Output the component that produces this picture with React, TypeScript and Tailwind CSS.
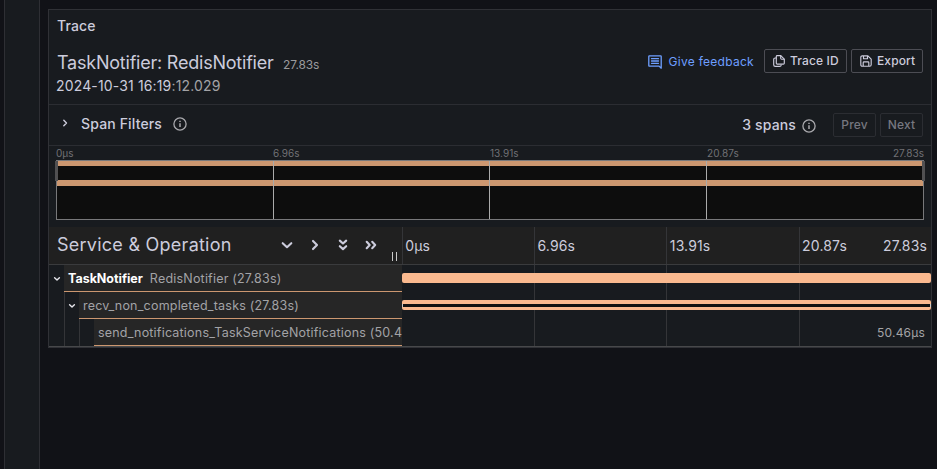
import type { ReactNode } from 'react';

const ticks = ['0µs', '6.96s', '13.91s', '20.87s'];

function Info({ className = '' }: { className?: string }) {
  return (
    <svg viewBox="0 0 14 14" className={`h-[14px] w-[14px] shrink-0 ${className}`} fill="none" stroke="#a9a9ad" strokeWidth="1.3">
      <circle cx="7" cy="7" r="6.1" />
      <path d="M7 6.3V10" strokeWidth="1.5" />
      <path d="M7 3.7v1.4" strokeWidth="1.5" />
    </svg>
  );
}

function Glyph({ d, className = '', width = 2.1 }: { d: string; className?: string; width?: number }) {
  return (
    <svg viewBox="0 0 16 16" className={`h-4 w-4 shrink-0 ${className}`} fill="none" stroke="#ccccdc" strokeWidth={width} strokeLinecap="round" strokeLinejoin="round">
      <path d={d} />
    </svg>
  );
}

function Button({ children, className }: { children: ReactNode; className: string }) {
  return (
    <button className={`flex h-6 shrink-0 items-center rounded-[2px] border text-[12px] font-medium leading-[22px] tracking-[0.13px] ${className}`}>
      {children}
    </button>
  );
}

function Grid() {
  return (
    <>
      {ticks.map((t) => (
        <div key={t} className="border-l border-[#343538] first:border-transparent" />
      ))}
    </>
  );
}

function Row({ indent, chevron, children, bar }: { indent: number; chevron?: boolean; children: ReactNode; bar: ReactNode }) {
  return (
    <div className="flex h-[27px]">
      <div className="flex w-[352.8px] shrink-0">
        {Array.from({ length: indent }, (_, i) => (
          <div key={i} className={`flex w-[15px] shrink-0 items-center justify-center ${i > 0 ? 'border-l border-[#343538]' : ''}`}>
            {chevron && i === indent - 1 && (
              <svg viewBox="0 0 8 8" className="mt-px h-2 w-2" fill="none" stroke="#e6e6ec" strokeWidth="1.4" strokeLinecap="round" strokeLinejoin="round">
                <path d="M1.6 2.8 4 5.1l2.4-2.3" />
              </svg>
            )}
          </div>
        ))}
        <div className="flex min-w-0 flex-1 items-center whitespace-nowrap border-b border-[#cc9770] bg-[#262626] pl-1 pt-[2px] text-[12.5px] tracking-[0.2px] text-[#a3a3a6]">
          {children}
        </div>
      </div>
      <div className="relative grid flex-1 grid-cols-4">
        <Grid />
        {bar}
      </div>
    </div>
  );
}

export default function App() {
  return (
    <div className="flex h-[469px] w-[937px] overflow-hidden bg-[#111217] pl-1 font-['Inter',sans-serif] text-[#ccccdc]">
      <div className="w-9 shrink-0 border-x border-[#2e2f34] bg-[#181b1f]" />
      <section className="ml-2 mt-[9px] flex h-[339px] w-[884px] shrink-0 flex-col border border-[#303136] bg-[#181b1f]">
        <h2 className="h-8 pl-2 text-[14px] font-medium leading-8 tracking-[0.15px]">Trace</h2>
        <header className="flex h-[63px] shrink-0 justify-between border-b border-[#2b2d32] pl-2 pr-2">
          <div>
            <div className="flex items-baseline pt-[9px] leading-6">
              <h1 className="text-[18px] tracking-[-0.22px]">TaskNotifier: RedisNotifier</h1>
              <span className="ml-[9.5px] text-[12px] tracking-[-0.15px] text-[#9a9a9d]">27.83s</span>
            </div>
            <div className="-ml-px -mt-[2px] text-[14px] leading-[22px] tracking-[0.15px]">
              2024-10-31 16:19<span className="text-[#a3a3a6]">:12.029</span>
            </div>
          </div>
          <div className="flex h-6 pt-[7px]">
            <a className="mr-[10px] flex h-6 items-center gap-[7px] pt-[2px] text-[12px] tracking-[0.28px] text-[#6e9fff]">
              <svg viewBox="0 0 14 14" className="h-[14px] w-[14px]" fill="none" stroke="#6e9fff" strokeWidth="1.3" strokeLinejoin="round" strokeLinecap="round">
                <path d="M1.4.9h11.2q.6 0 .6.6v11.7l-2.1-2.1H1.4q-.6 0-.6-.6v-9q0-.6.6-.6Z" />
                <path d="M3.5 3.7h7M3.5 6h7M3.5 8.3h7" />
              </svg>
              Give feedback
            </a>
            <Button className="mr-1 w-[83px] gap-[5px] border-[#4c4d54] pl-2">
              <svg viewBox="0 0 12 12" className="h-3 w-3" fill="none" stroke="#ccccdc" strokeWidth="1.15" strokeLinejoin="round" strokeLinecap="round">
                <path d="M4.2.6h3.6l3.5 3.5v4.1q0 .9-.9.9H4.2q-.9 0-.9-.9V1.5q0-.9.9-.9Z" />
                <path d="M7.7.8v2.5q0 .9.9.9h2.5M3.2 3h-1Q.7 3 .7 4.5v5.3q0 1.6 1.6 1.6h4.4q1.4 0 1.5-1.4" />
              </svg>
              Trace ID
            </Button>
            <Button className="w-[72px] gap-[5px] border-[#4c4d54] pl-2">
              <svg viewBox="0 0 12 12" className="h-3 w-3" fill="none" stroke="#ccccdc" strokeWidth="1.15" strokeLinejoin="round">
                <path d="M2.3.8h5.6l3.3 3.3v5.6q0 1.5-1.5 1.5H2.3Q.8 11.2.8 9.7V2.3Q.8.8 2.3.8Z" />
                <path d="M3.5.9v2.8h4V.9M3.2 11V7.7q0-.8.8-.8h4q.8 0 .8.8V11" />
              </svg>
              Export
            </Button>
          </div>
        </header>

        <div className="flex h-[41px] shrink-0 items-center border-b border-[#2b2d32] pl-2 pr-2">
          <Glyph d="M6.8 5.2 9.5 8l-2.7 2.8" width={1.4} className="-mt-[4px]" />
          <span className="-mt-[3px] ml-2 text-[14px] font-medium tracking-[0.15px]">Span Filters</span>
          <Info className="-mt-[2px] ml-[11px]" />
          <div className="ml-auto flex items-center">
            <span className="-mt-[2px] text-[14px] font-medium tracking-[0.15px]">3 spans</span>
            <Info className="ml-[6px] mr-[17px] mt-[2px]" />
            <Button className="mr-1 w-[43px] justify-center border-[#2b2d32] text-[#767780]">Prev</Button>
            <Button className="w-[43px] justify-center border-[#2b2d32] text-[#767780]">Next</Button>
          </div>
        </div>

        <div className="shrink-0 px-[7px] pb-[7px]">
          <div className="relative grid h-[14px] grid-cols-4 text-[10px] leading-[14px] tracking-[0.05px] text-[#717175]">
            {ticks.map((t) => (
              <span key={t}>{t}</span>
            ))}
            <span className="absolute right-0">27.83s</span>
          </div>
          <div className="relative h-[60px] border border-[#78787a] bg-[#0d0d0d]">
            <div className="h-[5px] bg-[#cc9770]" />
            <div className="mt-[14px] h-[6px] bg-[#cc9770]" />
            <div className="absolute -left-px inset-y-0 right-[0.2px] grid grid-cols-4">
              {ticks.map((t) => (
                <div key={t} className="border-l border-[#aaaaaa] first:border-transparent" />
              ))}
            </div>
            <div className="absolute -left-[2px] top-0 h-5 w-[3px] bg-[#505052]" />
            <div className="absolute -right-[2px] top-0 h-5 w-[3px] bg-[#505052]" />
          </div>
        </div>

        <div className="flex h-[38px] shrink-0 border-b border-[#3a3b3d] bg-[#202020]">
          <div className="relative flex w-[352.8px] shrink-0 items-center pl-2">
            <span className="-mt-[2px] text-[18px] tracking-[0.25px]">Service &amp; Operation</span>
            <div className="absolute left-[230px] top-[10px] flex gap-3">
              <Glyph d="M3.7 6.2 8 10.2l4.3-4" />
              <Glyph d="M6 3.9 10 8l-4 4.1" />
              <Glyph d="M4.8 3.6 8 6.5l3.2-2.9M4.8 9.2 8 12.1l3.2-2.9" />
              <Glyph d="M3.7 4.8 6.7 8l-3 3.2M9.2 4.8l3 3.2-3 3.2" />
            </div>
            <div className="absolute right-[4.8px] top-[25px] h-[9px] w-[5px] border-x border-[#c8c8c8]" />
          </div>
          <div className="relative grid flex-1 grid-cols-4 text-[14px] leading-[37px] tracking-[0.15px]">
            {ticks.map((t) => (
              <span key={t} className="border-l border-[#343538] pl-[2.4px]">{t}</span>
            ))}
            <span className="absolute right-1">27.83s</span>
          </div>
        </div>

        <div className="border-b border-[#47484a]">
          <Row indent={1} chevron bar={<div className="absolute inset-x-0 top-2 h-[10px] rounded-[2px] bg-[#fab98f]" />}>
            <b className="mr-[7px] text-[12.5px] font-bold tracking-[-0.02px] text-white">TaskNotifier</b>
            RedisNotifier (27.83s)
          </Row>
          <Row
            indent={2}
            chevron
            bar={
              <div className="absolute inset-x-0 top-2 h-[10px] rounded-[2px] bg-[#fab98f] pt-1">
                <div className="h-[3px] border-x border-[#c8c8c8] bg-[#111111]" />
              </div>
            }
          >
            recv_non_completed_tasks (27.83s)
          </Row>
          <Row indent={3} bar={<span className="absolute right-[6px] text-[12px] leading-[27px] tracking-[0.2px] text-[#a3a3a6]">50.46µs</span>}>
            send_notifications_TaskServiceNotifications (50.4
          </Row>
        </div>
      </section>
    </div>
  );
}
